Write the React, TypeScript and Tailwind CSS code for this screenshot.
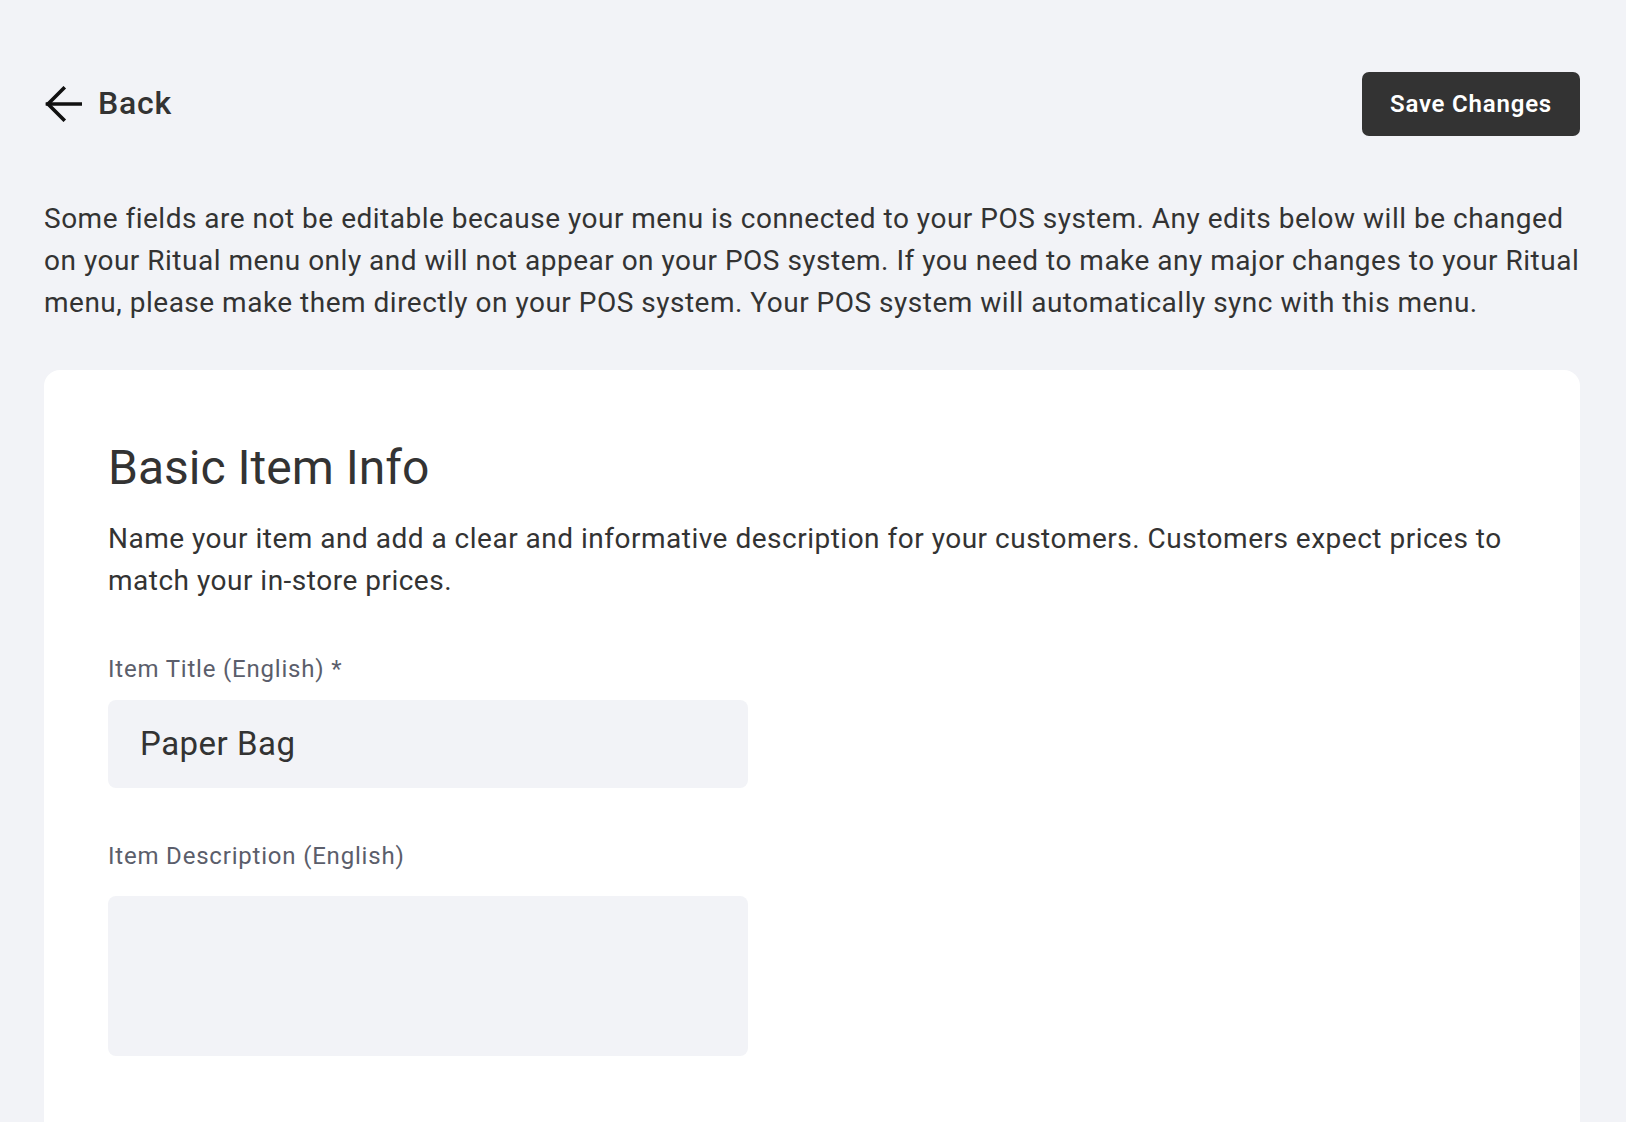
const font = { fontFamily: 'Roboto, "Noto Sans", sans-serif' }

function BackArrow() {
  return (
    <svg width="38" height="36" viewBox="0 0 38 36" fill="none" className="shrink-0">
      <path d="M37 18H3.5" stroke="#111" strokeWidth="3.6" strokeLinecap="square" />
      <path d="M19.5 2.5 4 18l15.5 15.5" stroke="#111" strokeWidth="3.6" strokeLinecap="square" />
    </svg>
  )
}

export default function App() {
  return (
    <div className="min-h-screen bg-[#f2f3f7] pl-[44px] pr-[46px] pt-[72px] text-[#333]" style={font}>
      <div className="flex items-center justify-between">
        <button className="flex items-center gap-[16px] text-[32px] font-medium tracking-[0.8px] text-[#333]">
          <BackArrow />
          <span className="-mt-[2px] leading-none">Back</span>
        </button>
        <button className="h-[64px] w-[218px] rounded-[7px] bg-[#333] text-[24px] font-semibold tracking-[0.8px] text-white">
          Save Changes
        </button>
      </div>

      <p className="mt-[62px] text-[28px] leading-[42px] tracking-[0.5px] text-[#333]">
        Some fields are not be editable because your menu is connected to your POS system. Any edits below will be
        changed on your Ritual menu only and will not appear on your POS system. If you need to make any major changes
        to your Ritual menu, please make them directly on your POS system. Your POS system will automatically sync with
        this menu.
      </p>

      <div className="mt-[46px] rounded-t-[16px] bg-white px-[64px] pt-[70px] pb-[80px]">
        <h2 className="text-[48px] leading-[56px] font-normal text-[#333]">Basic Item Info</h2>
        <p className="mt-[22px] text-[28px] leading-[42px] tracking-[0.5px] text-[#333]">
          Name your item and add a clear and informative description for your customers. Customers expect prices to
          match your in-store prices.
        </p>

        <label className="mt-[51px] block text-[24px] leading-[32px] tracking-[0.8px] text-[#5b5e6b]">
          Item Title (English) *
        </label>
        <div className="mt-[15px] flex h-[88px] w-[640px] items-center rounded-[8px] bg-[#f2f3f7] px-[32px]">
          <span className="text-[33px] tracking-[0.5px] text-[#333]">Paper Bag</span>
        </div>

        <label className="mt-[52px] block text-[24px] leading-[32px] tracking-[0.8px] text-[#5b5e6b]">
          Item Description (English)
        </label>
        <div className="mt-[24px] h-[160px] w-[640px] rounded-[8px] bg-[#f2f3f7]" />
      </div>
    </div>
  )
}
